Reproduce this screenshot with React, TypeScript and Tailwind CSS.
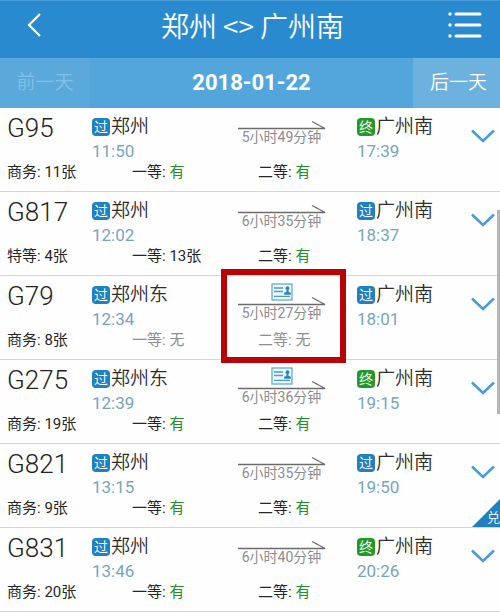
import type { ReactNode } from "react";

type StopKind = "过" | "终";

interface Seat {
  label: string;
  value: string;
}

interface Train {
  code: string;
  from: string;
  depart: string;
  to: string;
  toKind: StopKind;
  arrive: string;
  duration: string;
  idCard?: boolean;
  highlighted?: boolean;
  redeemable?: boolean;
  seats: Seat[];
}

const TRAINS: Train[] = [
  {
    code: "G95", from: "郑州", depart: "11:50", to: "广州南", toKind: "终", arrive: "17:39", duration: "5小时49分钟",
    seats: [{ label: "商务", value: "11张" }, { label: "一等", value: "有" }, { label: "二等", value: "有" }],
  },
  {
    code: "G817", from: "郑州", depart: "12:02", to: "广州南", toKind: "过", arrive: "18:37", duration: "6小时35分钟",
    seats: [{ label: "特等", value: "4张" }, { label: "一等", value: "13张" }, { label: "二等", value: "有" }],
  },
  {
    code: "G79", from: "郑州东", depart: "12:34", to: "广州南", toKind: "过", arrive: "18:01", duration: "5小时27分钟",
    idCard: true, highlighted: true,
    seats: [{ label: "商务", value: "8张" }, { label: "一等", value: "无" }, { label: "二等", value: "无" }],
  },
  {
    code: "G275", from: "郑州东", depart: "12:39", to: "广州南", toKind: "终", arrive: "19:15", duration: "6小时36分钟",
    idCard: true,
    seats: [{ label: "商务", value: "19张" }, { label: "一等", value: "有" }, { label: "二等", value: "有" }],
  },
  {
    code: "G821", from: "郑州", depart: "13:15", to: "广州南", toKind: "过", arrive: "19:50", duration: "6小时35分钟",
    redeemable: true,
    seats: [{ label: "商务", value: "9张" }, { label: "一等", value: "有" }, { label: "二等", value: "有" }],
  },
  {
    code: "G831", from: "郑州", depart: "13:46", to: "广州南", toKind: "终", arrive: "20:26", duration: "6小时40分钟",
    seats: [{ label: "商务", value: "20张" }, { label: "一等", value: "有" }, { label: "二等", value: "有" }],
  },
];

function IdCardIcon() {
  return (
    <svg width="22" height="18" viewBox="0 0 22 18" fill="none" className="shrink-0" aria-hidden="true">
      <rect x="1" y="1" width="20" height="16" fill="#eef7fc" stroke="#63acd8" strokeWidth="1.3" />
      <path d="M3 5h9M3 8.5h9M3 13.3h16" stroke="#4a9bce" strokeWidth="1.3" />
      <circle cx="16.5" cy="5.2" r="1.9" fill="#2a84c4" />
      <path d="M13.2 11.8v-2l2.3-1V7h2v1.8l2.3 1v2z" fill="#2a84c4" />
    </svg>
  );
}

function Stop({ kind, name, time }: { kind: StopKind; name: string; time: string }) {
  return (
    <div className="pt-px">
      <div className="flex h-7 items-center gap-px">
        <span
          className={`flex h-4.5 w-4.5 items-center justify-center rounded-sm text-[14px] leading-none text-white ${
            kind === "终" ? "bg-[#22992a]" : "bg-[#1f80c2]"
          }`}
        >
          {kind}
        </span>
        <span className="text-[19px] leading-7 text-[#2d2d2d]">{name}</span>
      </div>
      <div className="text-[17px] leading-5 font-normal text-[#76a5bf]">{time}</div>
    </div>
  );
}

function SeatInfo({ seat }: { seat: Seat }) {
  const soldOut = seat.value === "无";
  return (
    <span className={soldOut ? "text-[#8f8f8f]" : "text-[#262626]"}>
      {seat.label}: <span className={seat.value === "有" ? "text-[#1f8f28]" : ""}>{seat.value}</span>
    </span>
  );
}

function TrainRow({ train }: { train: Train }) {
  return (
    <li className="relative h-[84px] border-b border-[#d6d6d6] pt-1">
      <div className="grid h-12 grid-cols-[85fr_146fr_101fr_18fr_115fr_35fr]">
        <div className="pl-[7px] text-[26px] leading-8 text-[#222222]">{train.code}</div>
        <div className="pl-[7px]">
          <Stop kind="过" name={train.from} time={train.depart} />
        </div>
        <div className={`flex h-12 flex-col items-center ${train.idCard ? "pt-[3px]" : "pt-2"}`}>
          {train.idCard && <IdCardIcon />}
          <svg
            width="88" height="10" viewBox="0 0 88 10" fill="none" aria-hidden="true"
            className={`shrink-0 ${train.idCard ? "-mt-[5px]" : ""}`}
          >
            <path d="M0 8.5H87L74 1.5" stroke="#6b6b6b" strokeWidth="1.4" />
          </svg>
          <span className="-mt-px text-[14px] leading-4 font-normal whitespace-nowrap text-[#8c8c8c]">
            {train.duration}
          </span>
        </div>
        <div className="col-start-5 pl-[7px]">
          <Stop kind={train.toKind} name={train.to} time={train.arrive} />
        </div>
        <button type="button" aria-label={`${train.code} 详情`} className="flex h-12 items-center justify-center">
          <svg width="24" height="14" viewBox="0 0 24 14" fill="none">
            <path d="M1 1.5L12 12L23 1.5" stroke="#4a9cd6" strokeWidth="2.6" />
          </svg>
        </button>
      </div>
      <div className="grid grid-cols-[125fr_126fr_249fr] text-[15px] leading-6 font-normal">
        {train.seats.map((seat) => (
          <div key={seat.label} className="pl-[7px]">
            <SeatInfo seat={seat} />
          </div>
        ))}
      </div>
      {train.highlighted && (
        <div className="pointer-events-none absolute -top-[7px] -bottom-1 left-[44.2%] z-10 w-1/4 border-6 border-[#b80407]" />
      )}
      {train.redeemable && (
        <div className="absolute right-0 bottom-0 h-7 w-7">
          <svg className="absolute inset-0" width="28" height="28" viewBox="0 0 28 28" aria-hidden="true">
            <path d="M0 28L28 0V28z" fill="#1f80c2" />
          </svg>
          <span className="absolute right-0 bottom-px text-[13px] leading-4 text-white">兑</span>
        </div>
      )}
    </li>
  );
}

function DayButton({ children, disabled }: { children: ReactNode; disabled?: boolean }) {
  return (
    <button
      type="button"
      disabled={disabled}
      className={`text-[19px] ${disabled ? "bg-[#5ba9db] text-[#86bfe5]" : "bg-[#6db1de] pl-1 text-white"}`}
    >
      {children}
    </button>
  );
}

export default function App() {
  return (
    <div className="relative w-full overflow-hidden bg-[#fefefe] font-['Roboto','Noto_Sans_CJK_SC',sans-serif] font-[350]">
      <header className="flex h-[58px] items-center justify-between border-t border-[#4a9cd8] bg-[#2a8ad0] pr-[17px] pb-2.5 pl-[26px] text-white">
        <button type="button" aria-label="返回" className="flex w-8">
          <svg width="16" height="26" viewBox="0 0 16 26" fill="none">
            <path d="M14 2L3 13L14 24" stroke="currentColor" strokeWidth="2.2" />
          </svg>
        </button>
        <h1 className="font-['Noto_Sans_CJK_SC',sans-serif] text-[28px] leading-9">郑州 &lt;&gt; 广州南</h1>
        <button type="button" aria-label="菜单">
          <svg width="36" height="28" viewBox="0 0 36 28" fill="none">
            <path d="M9 3H33M9 14H33M9 25H33" stroke="currentColor" strokeWidth="3" strokeLinecap="round" />
            <path d="M3 3h.01M3 14h.01M3 25h.01" stroke="currentColor" strokeWidth="3.4" strokeLinecap="round" />
          </svg>
        </button>
      </header>

      <nav className="grid h-[50px] grid-cols-[90fr_323fr_87fr] bg-[#53a6db]">
        <DayButton disabled>前一天</DayButton>
        <div className="flex items-center justify-center pb-0.5 text-[22px] font-bold text-white">2018-01-22</div>
        <DayButton>后一天</DayButton>
      </nav>

      <ul>
        {TRAINS.map((train) => (
          <TrainRow key={train.code} train={train} />
        ))}
      </ul>

      {/* scroll indicator */}
      <div className="absolute top-[210px] right-0 h-[204px] w-[3px] bg-[#b5b5b5]" />
    </div>
  );
}
